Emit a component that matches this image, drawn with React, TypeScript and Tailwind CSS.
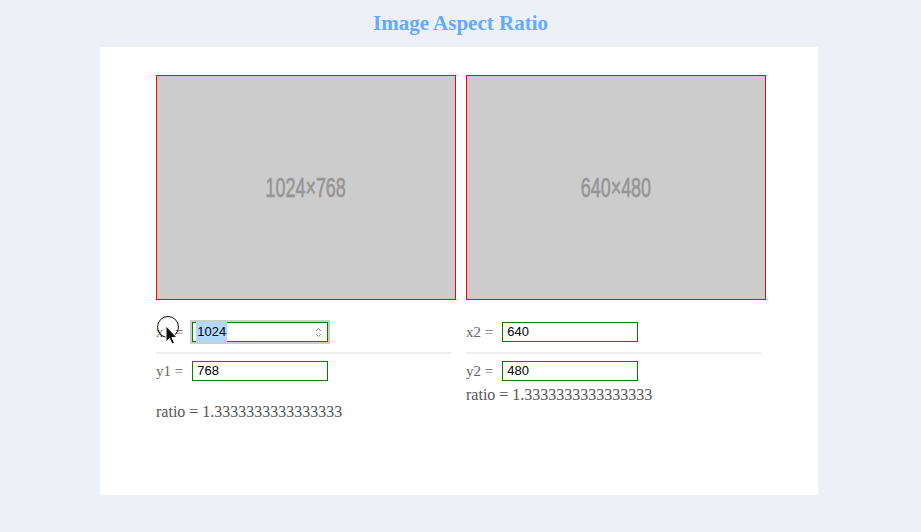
import React from 'react';

const serif = { fontFamily: 'Georgia, "Liberation Serif", "DejaVu Serif", serif' };

function Placeholder({ label }: { label: string }) {
  return (
    <div className="w-[300px] h-[225px] border border-[#ff0000] bg-[#cccccc] flex items-center justify-center">
      <span
        className="text-[28px] text-[#959595] scale-x-[0.64] whitespace-nowrap [-webkit-text-stroke:0.6px_#959595]"
        style={{ fontFamily: '"Liberation Sans", Arial, sans-serif' }}
      >
        {label}
      </span>
    </div>
  );
}

function Field({ label, value }: { label: string; value: string }) {
  return (
    <div className="flex items-center gap-[9px] h-[20px]">
      <span className="text-[15px] text-[#666]" style={serif}>{label}</span>
      <div
        className="w-[136px] h-[20px] border border-[#008000] bg-white flex items-center px-[4px] text-[13px] text-black"
        style={{ fontFamily: '"Liberation Sans", Arial, sans-serif' }}
      >
        {value}
      </div>
    </div>
  );
}

function FocusedField({ label, value }: { label: string; value: string }) {
  return (
    <div className="relative flex items-center gap-[9px] h-[20px]">
      <span className="text-[15px] text-[#666]" style={serif}>{label}</span>
      <div
        className="w-[136px] h-[20px] border border-[#008000] bg-white flex items-center pl-[3px] pr-[5px] text-[13px] text-black shadow-[0_0_0_2px_#c6d3c4]"
        style={{ fontFamily: '"Liberation Sans", Arial, sans-serif' }}
      >
        <span className="bg-[#b3d7ff] px-[1px]">{value}</span>
        <div className="flex-1" />
        <svg width="7" height="11" viewBox="0 0 7 11">
          <path d="M1 4 L3.5 1.5 L6 4" fill="none" stroke="#888" strokeWidth="1" />
          <path d="M1 7 L3.5 9.5 L6 7" fill="none" stroke="#888" strokeWidth="1" />
        </svg>
      </div>
      {/* click highlight + pointer over the label */}
      <svg className="absolute left-[0px] top-[-6px]" width="26" height="32" viewBox="0 0 26 32">
        <circle cx="12" cy="11" r="10.5" fill="none" stroke="#111" strokeWidth="1" />
        <path d="M10 10 L10 26 L13.5 22.5 L16 28 L18.5 27 L16 21.5 L21 21.5 Z" fill="#111" stroke="#fff" strokeWidth="1" />
      </svg>
    </div>
  );
}

export default function App() {
  return (
    <div className="min-h-[532px] bg-[#edf0f7]">
      <h1 className="h-[47px] flex items-center justify-center text-[21px] font-bold text-[#66aaff]" style={serif}>
        Image Aspect Ratio
      </h1>
      <div className="ml-[100px] w-[718px] h-[448px] bg-white pl-[56px] pt-[28px]">
        <div className="flex gap-[10px]">
          <div className="w-[300px]">
            <Placeholder label="1024×768" />
            <div className="mt-[22px]">
              <FocusedField label="x1 =" value="1024" />
            </div>
            <div className="mt-[10px] w-[295px] h-[2px] bg-[#eeeeee]" />
            <div className="mt-[7px]">
              <Field label="y1 =" value="768" />
            </div>
            <p className="mt-[19px] text-[16px] text-[#555]" style={serif}>ratio = 1.3333333333333333</p>
          </div>
          <div className="w-[300px]">
            <Placeholder label="640×480" />
            <div className="mt-[22px]">
              <Field label="x2 =" value="640" />
            </div>
            <div className="mt-[10px] w-[295px] h-[2px] bg-[#eeeeee]" />
            <div className="mt-[7px]">
              <Field label="y2 =" value="480" />
            </div>
            <p className="mt-[2px] text-[16px] text-[#555]" style={serif}>ratio = 1.3333333333333333</p>
          </div>
        </div>
      </div>
    </div>
  );
}
